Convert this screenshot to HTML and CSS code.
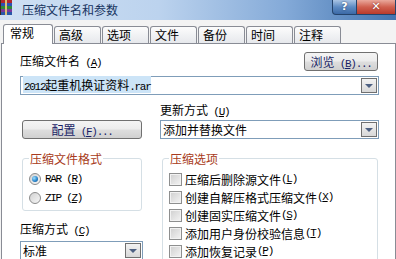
FILE: index.html
```html
<!DOCTYPE html>
<html lang="zh">
  <head>
    <meta charset="UTF-8" />
    <title>压缩文件名和参数</title>
    <link rel="stylesheet" href="styles.css">
  </head>

  <body>
    <div class="titlebar">
      <svg class="app-icon" viewBox="0 0 13 15" width="13" height="15">
        <rect x="0" y="0" width="12" height="3" fill="#b3262a" />
        <rect x="0" y="3" width="12" height="3" fill="#2f4fb5" />
        <rect x="0" y="6" width="12" height="3" fill="#2f8a3a" />
        <rect x="0" y="9" width="12" height="3" fill="#7b3a9a" />
        <rect x="0" y="12" width="12" height="3" fill="#2a58a8" />
        <rect x="5" y="0" width="2" height="15" fill="#d9c27a" />
        <rect x="0" y="0" width="1" height="15" fill="#3a2a1a" />
      </svg>
      <span class="title">压缩文件名和参数</span>
      <div class="caption-btns">
        <span class="cap-help">?</span>
        <span class="cap-close">✕</span>
      </div>
    </div>

    <div class="tabs">
      <div class="tab active">常规</div>
      <div class="tab">高级</div>
      <div class="tab">选项</div>
      <div class="tab">文件</div>
      <div class="tab">备份</div>
      <div class="tab">时间</div>
      <div class="tab">注释</div>
    </div>

    <div class="panel">
      <div class="name-row">
        <label>压缩文件名<span class="en"> (<u>A</u>)</span></label>
        <div class="btn browse-btn">浏览<span class="en"> (<u>B</u>)...</span></div>
      </div>
      <div class="combo name-combo">
        <span class="combo-text"><span class="sel"><span class="en">2012</span>起重机换证资料<span class="en">.rar</span></span></span>
        <span class="combo-arrow"></span>
      </div>

      <div class="options">
        <label class="update-label">更新方式<span class="en"> (<u>U</u>)</span></label>
        <div class="btn config-btn">配置<span class="en"> (<u>F</u>)...</span></div>
        <div class="combo update-combo">
          <span class="combo-text">添加并替换文件</span>
          <span class="combo-arrow"></span>
        </div>

        <div class="left-col">
          <fieldset class="group">
            <legend>压缩文件格式</legend>
            <div class="radio-row"><span class="radio checked"></span><span class="en">RAR (<u>R</u>)</span></div>
            <div class="radio-row"><span class="radio"></span><span class="en">ZIP (<u>Z</u>)</span></div>
          </fieldset>
          <label class="method-label">压缩方式<span class="en"> (<u>C</u>)</span></label>
          <div class="combo method-combo">
            <span class="combo-text">标准</span>
            <span class="combo-arrow"></span>
          </div>
        </div>

        <fieldset class="group right-group">
          <legend>压缩选项</legend>
          <div class="check-row"><span class="check"></span>压缩后删除源文件<span class="en"> (<u>L</u>)</span></div>
          <div class="check-row"><span class="check"></span>创建自解压格式压缩文件<span class="en"> (<u>X</u>)</span></div>
          <div class="check-row"><span class="check"></span>创建固实压缩文件<span class="en"> (<u>S</u>)</span></div>
          <div class="check-row"><span class="check"></span>添加用户身份校验信息<span class="en"> (<u>T</u>)</span></div>
          <div class="check-row"><span class="check"></span>添加恢复记录<span class="en"> (<u>P</u>)</span></div>
        </fieldset>
      </div>
    </div>
  </body>
</html>
```

FILE: styles.css
```css
body {
  margin: 0;
  width: 396px;
  height: 259px;
  overflow: hidden;
  font-family: "Noto Sans CJK SC", sans-serif;
  font-size: 12px;
  color: #000;
  background: #f3f3f3;
}

.en {
  font-family: "Liberation Mono", monospace;
  font-size: 11px;
  letter-spacing: -1.3px;
}

/* title bar */
.titlebar {
  display: flex;
  height: 20px;
  background: linear-gradient(to right, #cfe0f3 0%, #bcd3ee 40%, #84aad8 72%, #4274b0 100%);
}

.app-icon {
  margin-right: 9px;
}

.title {
  padding-top: 2px;
  line-height: 15px;
  color: #17345f;
}

.caption-btns {
  margin-left: auto;
  display: flex;
  align-items: flex-start;
}

.cap-help,
.cap-close {
  box-sizing: border-box;
  height: 15px;
  border: 1px solid #24436b;
  border-top: none;
  color: #fff;
  font-family: "DejaVu Sans", sans-serif;
  font-weight: bold;
  font-size: 11px;
  line-height: 14px;
  text-align: center;
}

.cap-help {
  width: 25px;
  border-radius: 0 0 0 4px;
  background: linear-gradient(#a9c4e4, #5d8bc3 50%, #3b69a6);
  text-shadow: 0 0 2px #1d3559;
}

.cap-close {
  width: 39px;
  border-left: none;
  background: linear-gradient(#eaa89c, #d0604f 50%, #b93a2b);
  text-shadow: 0 0 2px #6b1a12;
}

/* tabs */
.tabs {
  display: flex;
  align-items: flex-end;
  height: 23px;
  padding-left: 3px;
  position: relative;
  z-index: 1;
}

.tab {
  box-sizing: border-box;
  width: 47px;
  height: 17px;
  margin-right: 1px;
  padding-left: 4px;
  border: 1px solid #898c95;
  border-bottom: none;
  border-radius: 3px 3px 0 0;
  background: linear-gradient(#fcfcfc, #e6e8ec);
  line-height: 15px;
}

.tab.active {
  width: 50px;
  height: 20px;
  margin-bottom: -1px;
  padding-left: 6px;
  background: #fff;
}

/* panel */
.panel {
  margin-left: 1px;
  height: 208px;
  overflow: hidden;
  padding: 8px 16px 0 18px;
  border: 1px solid #898c95;
  border-bottom: none;
  background: #fff;
}

.name-row {
  display: flex;
  justify-content: space-between;
  align-items: flex-end;
}

label {
  display: block;
  line-height: 15px;
}

.btn {
  box-sizing: border-box;
  height: 19px;
  border: 1px solid #707070;
  border-radius: 3px;
  background: linear-gradient(#f4f4f4, #ececec 48%, #dedede 52%, #d0d0d0);
  color: #1a1f66;
  line-height: 17px;
  text-align: center;
}

.browse-btn {
  width: 74px;
  margin-right: 1px;
}

.combo {
  box-sizing: border-box;
  display: flex;
  align-items: center;
  height: 19px;
  border: 1px solid #7f9db9;
  background: #fff;
}

.combo-text {
  flex: 1;
  padding-left: 2px;
  line-height: 15px;
  white-space: nowrap;
}

.sel {
  background: #cce4f7;
  padding: 0 1px;
}

.combo-arrow {
  box-sizing: border-box;
  display: flex;
  align-items: center;
  justify-content: center;
  width: 16px;
  height: 15px;
  margin-right: 1px;
  border: 1px solid #707070;
  background: linear-gradient(#f2f2f2, #d8d8d8);
}

.combo-arrow::after {
  content: "";
  border-left: 4px solid transparent;
  border-right: 4px solid transparent;
  border-top: 4px solid #4d6082;
}

.name-combo {
  margin-top: 5px;
}

/* lower area */
.options {
  display: grid;
  grid-template-columns: 123px 219px;
  column-gap: 17px;
  margin-top: 7px;
}

.update-label {
  grid-column: 2;
  grid-row: 1;
}

.config-btn {
  grid-column: 1;
  grid-row: 2;
  margin: 0 1px 0 2px;
}

.update-combo {
  grid-column: 2;
  grid-row: 2;
}

.left-col {
  grid-column: 1;
  grid-row: 3;
  margin-top: 12px;
}

.group {
  margin: 0 1px 0 2px;
  padding: 3px 0 3px 6px;
  min-width: 0;
  border: 1px solid #d5dfe5;
  border-radius: 3px;
}

.group legend {
  padding: 0 1px;
  line-height: 15px;
  color: #a83b20;
}

.right-group {
  grid-column: 2;
  grid-row: 3;
  margin-top: 12px;
  padding-top: 4px;
}

.radio-row {
  display: flex;
  align-items: center;
  height: 19px;
}

.radio {
  box-sizing: border-box;
  display: flex;
  align-items: center;
  justify-content: center;
  width: 12px;
  height: 12px;
  margin-right: 4px;
  border: 1px solid #8b8b8b;
  border-radius: 50%;
  background: linear-gradient(135deg, #d2d2d2, #f6f6f6);
}

.radio.checked::after {
  content: "";
  width: 6px;
  height: 6px;
  border-radius: 50%;
  background: radial-gradient(circle at 35% 35%, #9fe0ff, #2b86cc 55%, #0f4f8c);
}

.check-row {
  display: flex;
  align-items: center;
  height: 18px;
  white-space: nowrap;
}

.check {
  box-sizing: border-box;
  width: 13px;
  height: 13px;
  margin-right: 3px;
  border: 1px solid #8e8f8f;
  background: linear-gradient(135deg, #cfcfcf, #f4f4f4);
  box-shadow: inset 0 0 0 1px #f2f2f2;
}

.method-label {
  margin-top: 10px;
}

.method-combo {
  margin-top: 2px;
}
```
